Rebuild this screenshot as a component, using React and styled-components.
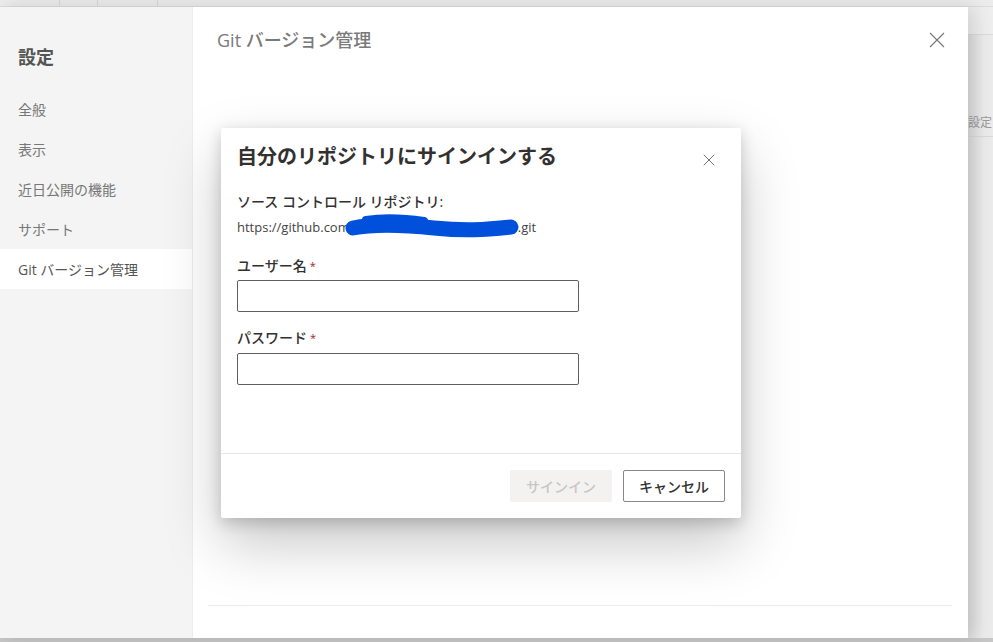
import React from "react";
import styled, { createGlobalStyle } from "styled-components";

const GlobalStyle = createGlobalStyle`
  html, body {
    margin: 0;
    padding: 0;
    height: 100%;
    overflow: hidden;
  }
  body {
    font-family: "Segoe UI", "Open Sans", "Noto Sans CJK JP", sans-serif;
    color: #323130;
  }
  * { box-sizing: border-box; }
`;

const Screen = styled.div`
  position: relative;
  width: 993px;
  height: 642px;
  display: flex;
  flex-direction: column;
  background: #e8e8e8;
`;

const TopBar = styled.div`
  height: 7px;
  display: flex;
  background: #ececec;
  border-bottom: 1px solid #dcdcdc;
`;

const TopTab = styled.div`
  width: ${(p) => p.w}px;
  border-right: 1px solid #d8d8d8;
`;

const Main = styled.div`
  flex: 1;
  display: flex;
  min-height: 0;
`;

const SettingsPanel = styled.div`
  width: 968px;
  display: flex;
  background: #fff;
  box-shadow: 6px 0 18px rgba(0, 0, 0, 0.13);
  z-index: 1;
`;

const Sidebar = styled.nav`
  width: 193px;
  background: #f4f4f4;
  padding-top: 38px;
  display: flex;
  flex-direction: column;
  border-right: 1px solid #ededed;
`;

const SideTitle = styled.div`
  font-size: 18px;
  line-height: 24px;
  font-weight: 700;
  color: #555;
  padding-left: 18px;
  margin-bottom: 20px;
`;

const SideItem = styled.div`
  height: 40px;
  display: flex;
  align-items: center;
  padding-left: 18px;
  font-size: 14px;
  color: ${(p) => (p.active ? "#555" : "#777")};
  background: ${(p) => (p.active ? "#fff" : "transparent")};
`;

const Content = styled.section`
  flex: 1;
  display: flex;
  flex-direction: column;
  padding: 21px 23px 0 24px;
`;

const ContentHeader = styled.div`
  display: flex;
  align-items: center;
  justify-content: space-between;
  height: 24px;
`;

const ContentTitle = styled.h1`
  margin: 0;
  font-size: 18px;
  line-height: 24px;
  font-weight: 500;
  color: #7a7a7a;
`;

const IconButton = styled.button`
  border: 0;
  background: transparent;
  padding: 0;
  margin-top: ${(p) => p.offset || 0}px;
  display: flex;
  align-items: center;
  justify-content: center;
  cursor: pointer;
`;

const ContentBody = styled.div`
  flex: 1;
`;

const ContentFooter = styled.div`
  margin: 0 -7px 32px -9px;
  border-top: 1px solid #ececec;
`;

const BackPage = styled.div`
  flex: 1;
  display: flex;
  flex-direction: column;
  overflow: hidden;
  background: linear-gradient(to right, #dcdcdc, #ebebeb 60%);
`;

const BackHeader = styled.div`
  height: 28px;
  border-bottom: 1px solid #dadada;
  background: #eeeeee;
`;

const BackRow = styled.div`
  height: 102px;
  display: flex;
  align-items: flex-end;
  padding-bottom: 5px;
  border-bottom: 1px solid #d9d9d9;
  font-size: 12px;
  color: #9a9a9a;
  white-space: nowrap;
`;

const BottomStrip = styled.div`
  height: 4px;
  background: #c7c7c7;
`;

const Dialog = styled.div`
  position: absolute;
  left: 221px;
  top: 128px;
  width: 520px;
  height: 390px;
  background: #fff;
  border-radius: 2px;
  display: flex;
  flex-direction: column;
  z-index: 2;
  box-shadow: 0 25.6px 57.6px rgba(0, 0, 0, 0.22),
    0 4.8px 14.4px rgba(0, 0, 0, 0.18);
`;

const DialogHeader = styled.div`
  display: flex;
  align-items: center;
  justify-content: space-between;
  padding: 15px 26px 0 16px;
`;

const DialogTitle = styled.h2`
  margin: 0;
  font-size: 20px;
  line-height: 28px;
  font-weight: 700;
  color: #323130;
`;

const DialogBody = styled.div`
  flex: 1;
  padding: 21px 16px 0;
  display: flex;
  flex-direction: column;
`;

const FieldLabel = styled.label`
  display: block;
  font-size: 14px;
  line-height: 20px;
  font-weight: 500;
  color: #323130;
  margin-top: ${(p) => p.gap || 0}px;
  margin-bottom: ${(p) => p.below || 0}px;
`;

const Required = styled.span`
  color: #a4262c;
  font-size: 11px;
  margin-left: 3px;
  vertical-align: top;
`;

const RepoUrl = styled.div`
  margin-top: 5px;
  height: 20px;
  font-size: 13px;
  line-height: 20px;
  color: #444;
  display: flex;
  align-items: center;
`;

const Redaction = styled.svg`
  display: block;
  overflow: visible;
  margin: 0 -2px 0 -6px;
`;

const TextInput = styled.input`
  width: 342px;
  height: 32px;
  border: 1px solid #605e5c;
  border-radius: 2px;
  background: #fff;
  font: inherit;
  padding: 0 8px;
  outline: none;
`;

const DialogFooter = styled.div`
  border-top: 1px solid #e6e6e6;
  display: flex;
  justify-content: flex-end;
  gap: 11px;
  padding: 16px 16px 16px;
`;

const Button = styled.button`
  width: 102px;
  height: 32px;
  border-radius: 2px;
  font-family: inherit;
  font-size: 14px;
  font-weight: 500;
  border: 1px solid ${(p) => (p.disabled ? "#f3f2f1" : "#8a8886")};
  background: ${(p) => (p.disabled ? "#f3f2f1" : "#fff")};
  color: ${(p) => (p.disabled ? "#c8c6c4" : "#323130")};
`;

function CloseIcon({ size, color }) {
  return (
    <svg width={size} height={size} viewBox="0 0 16 16">
      <path d="M1 1 L15 15 M15 1 L1 15" stroke={color} strokeWidth="1.1" fill="none" />
    </svg>
  );
}

const navItems = ["全般", "表示", "近日公開の機能", "サポート", "Git バージョン管理"];

export default function App() {
  return (
    <>
      <GlobalStyle />
      <Screen>
        <TopBar>
          <TopTab w={60} />
          <TopTab w={38} />
          <TopTab w={60} />
        </TopBar>
        <Main>
          <SettingsPanel>
            <Sidebar>
              <SideTitle>設定</SideTitle>
              {navItems.map((item, i) => (
                <SideItem key={item} active={i === navItems.length - 1}>
                  {item}
                </SideItem>
              ))}
            </Sidebar>
            <Content>
              <ContentHeader>
                <ContentTitle>Git バージョン管理</ContentTitle>
                <IconButton aria-label="閉じる">
                  <CloseIcon size={16} color="#777" />
                </IconButton>
              </ContentHeader>
              <ContentBody />
              <ContentFooter />
            </Content>
          </SettingsPanel>
          <BackPage>
            <BackHeader />
            <BackRow>設定</BackRow>
          </BackPage>
        </Main>
        <BottomStrip />

        <Dialog role="dialog">
          <DialogHeader>
            <DialogTitle>自分のリポジトリにサインインする</DialogTitle>
            <IconButton aria-label="閉じる" offset={6}>
              <CloseIcon size={12} color="#555" />
            </IconButton>
          </DialogHeader>
          <DialogBody>
            <FieldLabel>ソース コントロール リポジトリ:</FieldLabel>
            <RepoUrl>
              https://github.com
              <Redaction width="176" height="20" viewBox="0 0 176 20">
                <path
                  d="M9 11 C30 7, 60 8, 90 11 S140 13, 167 10"
                  stroke="#0050dc"
                  strokeWidth="15"
                  strokeLinecap="round"
                  fill="none"
                />
                <path
                  d="M22 3 C40 0, 60 1, 80 4"
                  stroke="#0050dc"
                  strokeWidth="8"
                  strokeLinecap="round"
                  fill="none"
                />
              </Redaction>
              .git
            </RepoUrl>
            <FieldLabel gap={19} below={4}>
              ユーザー名<Required>*</Required>
            </FieldLabel>
            <TextInput type="text" />
            <FieldLabel gap={16} below={5}>
              パスワード<Required>*</Required>
            </FieldLabel>
            <TextInput type="password" />
          </DialogBody>
          <DialogFooter>
            <Button disabled>サインイン</Button>
            <Button>キャンセル</Button>
          </DialogFooter>
        </Dialog>
      </Screen>
    </>
  );
}
